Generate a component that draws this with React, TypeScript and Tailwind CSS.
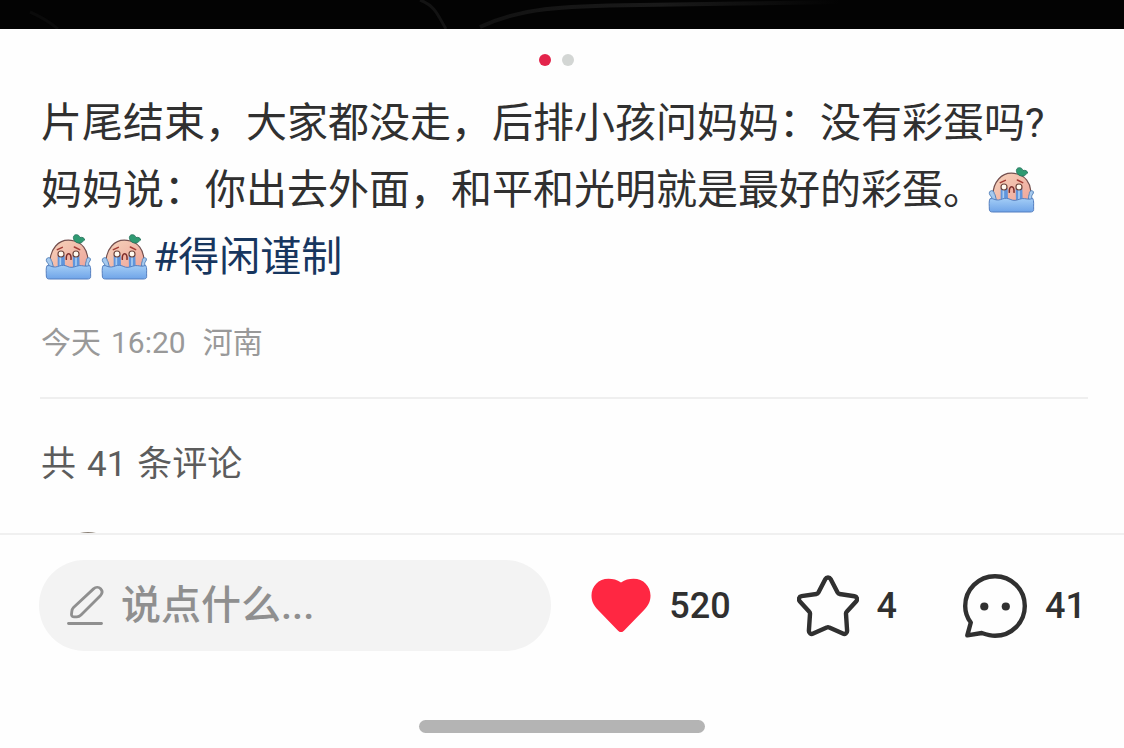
import React from "react";

function CryingPeach() {
  return (
    <svg
      role="img"
      aria-label="哭"
      viewBox="18 20 168 150"
      className="mb-1.5 inline-block h-[50px] w-14 align-middle"
    >
      <defs>
        <linearGradient id="peach" x1="0" y1="0" x2="1" y2="1">
          <stop offset="0" stopColor="#f6d3bb" />
          <stop offset="1" stopColor="#eea49a" />
        </linearGradient>
        <linearGradient id="water" x1="0" y1="0" x2="0" y2="1">
          <stop offset="0" stopColor="#a3cdf6" />
          <stop offset="1" stopColor="#6fa4e8" />
        </linearGradient>
      </defs>
      <path
        d="M48 130C42 104 48 78 62 62C76 46 98 42 118 47C142 53 156 74 158 96C159 108 158 120 154 130Z"
        fill="url(#peach)"
        stroke="#74504f"
        strokeWidth="3.5"
      />
      <path
        d="M118 46C112 36 116 28 124 28C130 28 134 32 135 37C141 34 149 38 149 44C144 46 143 52 136 53C128 54 122 51 118 46Z"
        fill="#2f9a72"
        stroke="#25705a"
        strokeWidth="2.5"
      />
      <path
        d="M68 90L89 90L90 126L68 126ZM113 90L133 90L134 126L114 126Z"
        fill="#5f95dc"
      />
      <path d="M76 94V124M123 94V124" stroke="#a9cdf2" strokeWidth="5" />
      <circle cx="78" cy="86" r="9" fill="#fffaf0" stroke="#6d443c" strokeWidth="3.5" />
      <circle cx="123" cy="86" r="9" fill="#fffaf0" stroke="#6d443c" strokeWidth="3.5" />
      <path
        d="M67 73L82 66M118 65L134 73"
        stroke="#a33c35"
        strokeWidth="4.5"
        strokeLinecap="round"
      />
      <path
        d="M94 102C93 92 96 85 101 85C106 85 109 92 108 102"
        fill="#f4b2a2"
        stroke="#7d2d2b"
        strokeWidth="4.5"
        strokeLinecap="round"
      />
      <path
        d="M42 124C44 117 36 113 34 106C33 99 39 95 45 98C50 101 47 106 51 109L55 124ZM152 124C150 116 153 111 154 106C153 98 162 94 166 100C168 106 161 109 161 115L162 124Z"
        fill="#a5c9ee"
        stroke="#5784bb"
        strokeWidth="3"
      />
      <path
        d="M36 121C46 119 50 126 61 125C72 124 75 119 86 120C97 121 100 127 111 126C122 125 129 119 140 121C149 122 156 124 164 120C169 128 166 140 167 153C167 160 163 161 156 161H44C37 161 34 159 34 152C34 141 32 129 36 121Z"
        fill="url(#water)"
        stroke="#557fc0"
        strokeWidth="3"
      />
    </svg>
  );
}

function PencilIcon() {
  return (
    <svg
      aria-hidden="true"
      viewBox="0 0 38 42"
      className="h-[42px] w-[38px] shrink-0"
      fill="none"
      stroke="#8f8f8f"
      strokeWidth="2.8"
      strokeLinecap="round"
      strokeLinejoin="round"
    >
      <path d="M6.5 22.5L26.5 3.9C28.8 1.8 31.8 1.8 33.6 3.7C35.5 5.7 35.4 8.5 33.3 10.7L14 30C12.8 31.2 11.4 31.9 9.8 31.9H7.2C5.5 31.9 4.4 30.9 4.5 29.3L4.8 26.5C5 24.8 5.5 23.5 6.5 22.5Z" />
      <path d="M1.5 38.5H34.5" />
    </svg>
  );
}

function HeartIcon() {
  return (
    <svg aria-hidden="true" viewBox="0 0 60 56" className="h-14 w-[60px]">
      <path
        d="M30 4.6C26 1.8 22 .8 17.5 .8C7.5 .8 .5 8.3 .5 17.6C.5 23.6 2.9 28 7.5 32.5L26.6 52.2C28.8 54.7 31.2 54.7 33.4 52.2L52.6 32.5C57.2 28 59.5 23.6 59.5 17.6C59.5 8.3 52.5 .8 42.5 .8C38 .8 34 1.8 30 4.6Z"
        fill="#ff2742"
      />
    </svg>
  );
}

function StarIcon() {
  return (
    <svg aria-hidden="true" viewBox="0 0 62 62" className="h-[62px] w-[62px]">
      <path
        d="M28.4 4C29.5 1.9 32.5 1.9 33.6 4L40.6 17.6C41 18.4 41.7 18.9 42.6 19L57.5 21.2C60 21.6 60.9 24.4 59.3 26.2L49.7 36.8C49.1 37.4 48.9 38.2 49 39L50.1 55.6C50.3 58.1 48 59.6 45.8 58.6L32.3 52.6C31.5 52.2 30.5 52.2 29.7 52.6L16.2 58.6C14 59.6 11.7 58.1 11.9 55.6L13 39C13.1 38.2 12.9 37.4 12.3 36.8L2.7 26.2C1.1 24.4 2 21.6 4.5 21.2L19.4 19C20.3 18.9 21 18.4 21.4 17.6Z"
        fill="none"
        stroke="#303030"
        strokeWidth="4.4"
        strokeLinejoin="round"
      />
    </svg>
  );
}

function CommentIcon() {
  return (
    <svg aria-hidden="true" viewBox="0 0 64 64" className="h-16 w-16">
      <path
        d="M7.8 48.5C4.2 43.8 2.2 38.2 2.2 32C2.2 15.5 15.5 2.2 32 2.2S61.8 15.5 61.8 32S48.5 61.8 32 61.8C27.6 61.8 23 60.4 18.8 59L4.3 61.3Z"
        fill="none"
        stroke="#303030"
        strokeWidth="4.4"
        strokeLinejoin="round"
      />
      <circle cx="21.3" cy="32.5" r="4.1" fill="#303030" />
      <circle cx="42.8" cy="32.5" r="4.1" fill="#303030" />
    </svg>
  );
}

function Action({
  label,
  count,
  children,
}: {
  label: string;
  count: number;
  children: React.ReactNode;
}) {
  return (
    <button type="button" aria-label={`${label} ${count}`} className="flex items-center gap-[18px]">
      {children}
      <span className="text-4xl font-medium">{count}</span>
    </button>
  );
}

export default function App() {
  return (
    <div className="flex h-screen flex-col bg-[#fefefe] font-[Roboto,'Noto_Sans_CJK_SC',sans-serif] text-[#303030]">
      <main className="min-h-0 flex-1 overflow-hidden" lang="zh-CN">
        <div className="h-[29px] bg-[#030303]">
          <svg
            aria-hidden="true"
            viewBox="0 0 1124 29"
            preserveAspectRatio="none"
            className="h-full w-full"
            fill="none"
          >
            <defs>
              <linearGradient id="sheen" x1="0" y1="0" x2="1" y2="0">
                <stop offset="0" stopColor="#121212" />
                <stop offset=".5" stopColor="#1a1a1a" />
                <stop offset="1" stopColor="#030303" />
              </linearGradient>
            </defs>
            <path d="M420 0C436 6 438 16 446 29" stroke="#131313" strokeWidth="3" />
            <path d="M480 27C520 8 560 6 640 5S760 3 840 2" stroke="url(#sheen)" strokeWidth="4" />
            <path d="M30 12C44 18 52 24 58 29" stroke="#0a0a0a" strokeWidth="3" />
          </svg>
        </div>

        <div className="flex justify-center gap-[11px] pt-[25px] pr-[11px]">
          <span className="size-3 rounded-full bg-[#e3244b]" />
          <span className="size-3 rounded-full bg-[#d3d6d4]" />
        </div>

        <article className="pt-6 pr-9 pl-[41px]">
          <p className="text-[41px] leading-[67px]">
            片尾结束，大家都没走，后排小孩问妈妈：没有彩蛋吗?
            <br />
            妈妈说：你出去外面，和平和光明就是最好的彩蛋。
            <CryingPeach />
            <CryingPeach />
            <CryingPeach />
            <a href="#topic" className="text-[#17365f]">
              #得闲谨制
            </a>
          </p>
          <div className="mt-7 flex gap-[17px] text-[30px] leading-[48px] text-[#999999]">
            <time className="flex gap-2.5">
              <span>今天</span>
              <span>16:20</span>
            </time>
            <span>河南</span>
          </div>
        </article>

        <section className="mt-[30px] mr-9 ml-10 border-t-2 border-[#efefef] pt-10">
          <h2 className="flex gap-[11px] pl-px text-[35px] leading-[52px] text-[#5c5c5c]">
            <span>共</span>
            <span>41</span>
            <span>条评论</span>
          </h2>
          <div className="mt-[41px] ml-4 size-16 rounded-full bg-[#8c8278]" />
        </section>
      </main>

      <footer className="border-t-2 border-[#f0f0f0] pt-[25px] pb-[15px]">
        <div className="flex items-center gap-10 pr-[38px] pl-[39px]">
          <label className="flex h-[91px] min-w-0 flex-1 items-center gap-4 rounded-full bg-[#f3f3f3] pl-7">
            <PencilIcon />
            <input
              type="text"
              aria-label="说点什么"
              placeholder="说点什么..."
              className="w-full min-w-0 bg-transparent text-[40px] font-medium outline-none placeholder:text-[#8f8f8f]"
            />
          </label>
          <div className="flex shrink-0 items-center gap-[66px]">
            <Action label="点赞" count={520}>
              <HeartIcon />
            </Action>
            <Action label="收藏" count={4}>
              <StarIcon />
            </Action>
            <Action label="评论" count={41}>
              <CommentIcon />
            </Action>
          </div>
        </div>
        <div className="mx-auto mt-[69px] h-[13px] w-[286px] rounded-full bg-[#b4b4b4]" />
      </footer>
    </div>
  );
}
